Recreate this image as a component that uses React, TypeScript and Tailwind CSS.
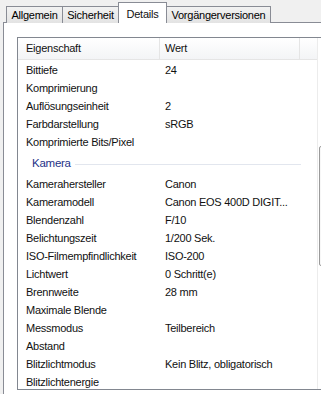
import React from "react";

const rows1: [string, string][] = [
  ["Bittiefe", "24"],
  ["Komprimierung", ""],
  ["Auflösungseinheit", "2"],
  ["Farbdarstellung", "sRGB"],
  ["Komprimierte Bits/Pixel", ""],
];
const rows2: [string, string][] = [
  ["Kamerahersteller", "Canon"],
  ["Kameramodell", "Canon EOS 400D DIGIT..."],
  ["Blendenzahl", "F/10"],
  ["Belichtungszeit", "1/200 Sek."],
  ["ISO-Filmempfindlichkeit", "ISO-200"],
  ["Lichtwert", "0 Schritt(e)"],
  ["Brennweite", "28 mm"],
  ["Maximale Blende", ""],
  ["Messmodus", "Teilbereich"],
  ["Abstand", ""],
  ["Blitzlichtmodus", "Kein Blitz, obligatorisch"],
  ["Blitzlichtenergie", ""],
];

function Row({ k, v }: { k: string; v: string }) {
  return (
    <div className="flex h-[18px] items-center">
      <div className="w-[142px] shrink-0 pl-[8px] whitespace-nowrap">{k}</div>
      <div className="pl-[5px] whitespace-nowrap">{v}</div>
    </div>
  );
}

function Tab({ label, w }: { label: string; w: string }) {
  return (
    <div
      className={`${w} h-[17px] -mr-px flex items-center justify-center border border-b-0 border-[#898c95] bg-gradient-to-b from-[#f2f2f2] to-[#e3e3e3] text-[#000]`}
    >
      {label}
    </div>
  );
}

export default function App() {
  return (
    <div
      className="relative h-[394px] w-[321px] overflow-hidden bg-[#f0f0f0] text-[11px] tracking-[-0.25px] text-[#111]"
      style={{ fontFamily: "'Segoe UI', 'Liberation Sans', Arial, sans-serif" }}
    >
      <div className="flex h-[23px] items-end pl-[6px]">
        <Tab label="Allgemein" w="w-[57px]" />
        <Tab label="Sicherheit" w="w-[57px]" />
        <div className="relative z-10 -mr-px flex h-[21px] w-[49px] items-start justify-center border border-b-0 border-[#898c95] bg-white pt-[3px]">
          Details
        </div>
        <Tab label="Vorgängerversionen" w="w-[105px]" />
      </div>
      <div className="-mt-px ml-[3px] h-[400px] w-[340px] border border-[#898c95] bg-white pl-[13px] pt-[14px]">
        <div className="flex h-[353px] w-[330px] border border-[#828790]">
          <div className="w-[299px] shrink-0">
            <div className="flex h-[22px] items-center border-b border-[#e5e5e5] bg-gradient-to-b from-[#ffffff] to-[#f3f4f6]">
              <div className="flex h-full w-[142px] shrink-0 items-center border-r border-[#e5e5e5] pl-[8px]">
                Eigenschaft
              </div>
              <div className="flex h-full w-[140px] shrink-0 items-center border-r border-[#e5e5e5] pl-[5px]">
                Wert
              </div>
              <div className="h-full flex-1" />
            </div>
            <div className="pt-[1px]">
              {rows1.map(([k, v]) => (
                <Row key={k} k={k} v={v} />
              ))}
              <div className="flex h-[24px] items-center pl-[14px] pt-[2px] pr-[16px]">
                <span className="text-[#1e3287] text-[11.5px]">Kamera</span>
                <div className="ml-[4px] h-px flex-1 bg-[#e2e6ee]" />
              </div>
              {rows2.map(([k, v]) => (
                <Row key={k} k={k} v={v} />
              ))}
            </div>
          </div>
          <div className="flex-1 border-l border-[#ececec] pl-[1px]">
            <div className="h-[108px]" />
            <div className="h-[120px] rounded-[2px] border border-[#9a9a9a] bg-[#f7f7f7]" />
          </div>
        </div>
      </div>
    </div>
  );
}
